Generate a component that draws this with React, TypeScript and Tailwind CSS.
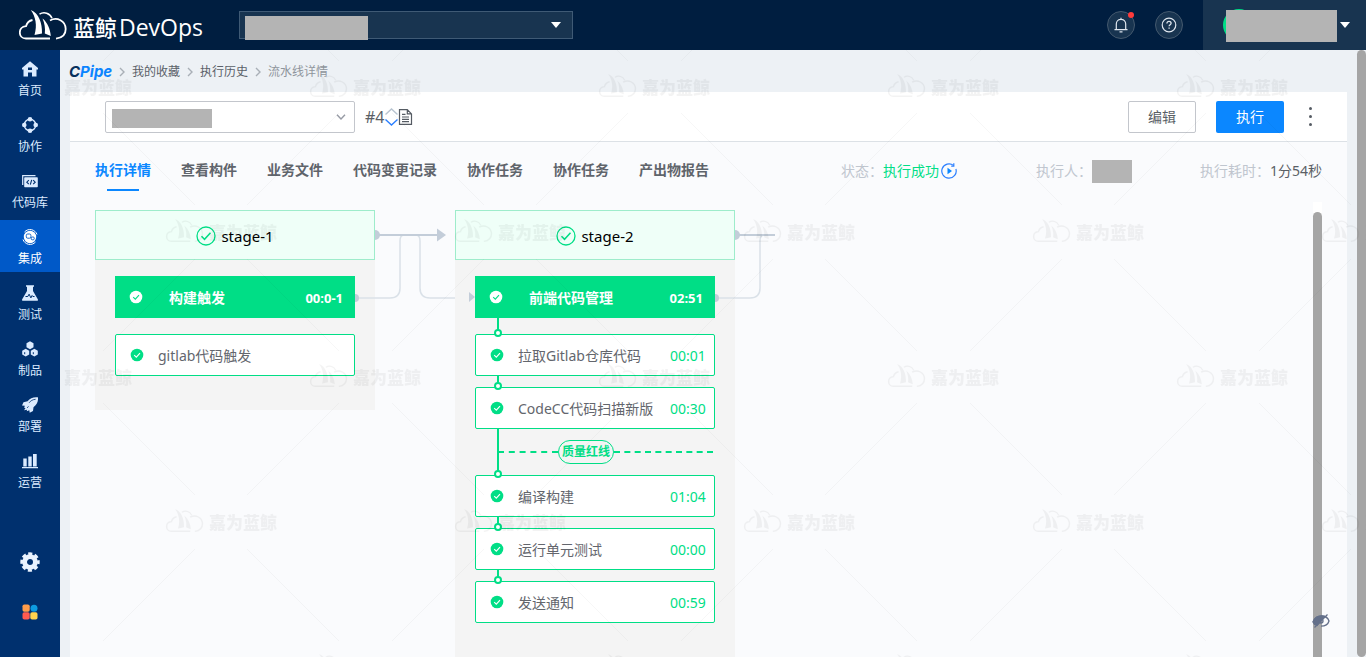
import { useState } from "react";
import type { ReactNode } from "react";
import clsx from "clsx";

type Step = { name: string; time?: string; gateBefore?: boolean };
type Stage = { name: string; job: string; jobTime: string; steps: Step[]; linked: boolean };

const tabs = ["执行详情", "查看构件", "业务文件", "代码变更记录", "协作任务", "协作任务", "产出物报告"];

const stages: Stage[] = [
  { name: "stage-1", job: "构建触发", jobTime: "00:0-1", linked: false, steps: [{ name: "gitlab代码触发" }] },
  {
    name: "stage-2",
    job: "前端代码管理",
    jobTime: "02:51",
    linked: true,
    steps: [
      { name: "拉取Gitlab仓库代码", time: "00:01" },
      { name: "CodeCC代码扫描新版", time: "00:30" },
      { name: "编译构建", time: "01:04", gateBefore: true },
      { name: "运行单元测试", time: "00:00" },
      { name: "发送通知", time: "00:59" },
    ],
  },
];

const icons: Record<string, ReactNode> = {
  home: <path d="M8 .2 0 7v1.500h1.500V15.600H6V11.500h4v4.100h4.500V8.500H16V7L8 .2ZM6 6.500h4v2.500H6Z" fillRule="evenodd" />,
  collab: (
    <>
      <circle cx="8" cy="8" r="5.800" fill="none" stroke="currentColor" strokeWidth="1.400" />
      <circle cx="8" cy="2.300" r="2.300" />
      <circle cx="8" cy="13.700" r="2.300" />
      <circle cx="2.300" cy="8" r="2.300" />
      <circle cx="13.700" cy="8" r="2.300" />
    </>
  ),
  code: (
    <>
      <path d="M0.700 12V2.700H13.500" fill="none" stroke="currentColor" strokeWidth="1.200" />
      <rect x="2.200" y="4.200" width="13.600" height="10" rx="0.800" />
      <path d="m6.800 7.200-2 2 2 2m4.400-4 2 2-2 2M9.700 6.800l-1.400 4.800" fill="none" stroke="#00306e" strokeWidth="1.100" />
    </>
  ),
  integrate: (
    <>
      <path d="M15 5.500A7.400 7.400 0 0 0 2.500 3M1 10.500A7.400 7.400 0 0 0 13.500 13" fill="none" stroke="currentColor" strokeWidth="1" />
      <circle cx="8" cy="8" r="6.200" />
      <rect x="4.300" y="5" width="4.600" height="4.200" rx="1.400" fill="none" stroke="#0059c8" strokeWidth="0.900" />
      <rect x="9.200" y="8" width="3" height="2.800" rx="1" fill="none" stroke="#0059c8" strokeWidth="0.900" />
    </>
  ),
  flask: (
    <>
      <path d="M4 0.300h8v1.500h-1v4.300l4.800 8.200c.400.800 0 1.500-.800 1.500H1c-.800 0-1.200-.700-.800-1.500l4.800-8.200V1.800h-1Z" />
      <path d="M3.500 11.500h2.300l1.300-2.300 1.800 3.700 1.200-2.400 .8 1h1.600" fill="none" stroke="#00306e" strokeWidth="1" />
    </>
  ),
  artifact: (
    <>
      <path d="m8 .300 3.500 2v3.900L8 8.200 4.500 6.200V2.300Z" />
      <path d="m3.700 7.700 3.500 2v3.900l-3.500 2-3.500-2V9.700Z" />
      <path d="m12.300 7.700 3.500 2v3.900l-3.500 2-3.500-2V9.700Z" />
      <path d="M2.700 11.200v2m8.600-2v2" stroke="#00306e" />
    </>
  ),
  rocket: (
    <>
      <path d="M15.900.300C11.500-.2 8 1.200 5.600 4.300L1.500 5.300 0 8.500l2.800.2-.6 2.100 1.300.4L2 13.300l3-.6-.2 1.600 2.500-1 .4 2.500 3.300-1.800.5-3.700C14.900 7.700 16.500 4.200 15.900.300Z" />
      <path d="M13.600 2.300c-3 .2-5 1.500-6.500 3.500M5 10.800l1.600-1.300" stroke="#00306e" strokeWidth="0.800" fill="none" />
    </>
  ),
  bars: <path d="M1.300 5.500h3.400v8H1.300ZM6.300 3.500h3.400v10H6.300ZM11 1h3.700v12.500H11ZM0 14h16v1.200H0Z" />,
};

const menu = [
  { icon: "home", label: "首页" },
  { icon: "collab", label: "协作" },
  { icon: "code", label: "代码库" },
  { icon: "integrate", label: "集成" },
  { icon: "flask", label: "测试" },
  { icon: "artifact", label: "制品" },
  { icon: "rocket", label: "部署" },
  { icon: "bars", label: "运营" },
];

function WhaleShape() {
  return (
    <>
      <path d="M31 28.500H7C-1 28.500-1.500 17 7 16.200c1-3.500 3-5.500 6.500-6.200" fill="none" stroke="currentColor" strokeWidth="1.800" />
      <path d="M20.500 4.200c4.500-3 10.500-1 12.500 4" fill="none" stroke="currentColor" strokeWidth="1.500" />
      <path d="M31 10.500c7-4 15.700.5 15.700 8.500 0 5.500-3.700 9-9.700 9.700" fill="none" stroke="currentColor" strokeWidth="1.800" />
      <path d="M11.800 0c8 3.500 11.500 12.500 11.200 23.500L15.500 25C18.500 15 16.500 6.500 11.800 0Z" />
      <path d="M23.500 8.500c5 4 7.800 10.500 8.300 17.500l-6-2.500C26.500 18 25.500 13 23.500 8.500Z" />
    </>
  );
}

function CheckDot({ inverse }: { inverse?: boolean }) {
  return (
    <svg viewBox="0 0 14 14" className="size-3.5 shrink-0" aria-hidden="true">
      <circle cx="7" cy="7" r="6.300" fill={inverse ? "#fff" : "#00de86"} />
      <path d="m4.200 7.200 2.100 2 3.700-4" fill="none" stroke={inverse ? "#00de86" : "#fff"} strokeWidth="1.100" />
    </svg>
  );
}

function Header() {
  return (
    <header className="flex h-[50px] shrink-0 bg-[#001e40] text-white">
      <a href="#" className="flex w-[239px] items-center pl-[19px]" aria-label="蓝鲸DevOps">
        <svg viewBox="0 0 48 31" className="h-[31px] w-12" fill="currentColor" aria-hidden="true">
          <WhaleShape />
        </svg>
        <span className="mt-1 ml-1.5 text-[22px] leading-8 font-medium">蓝鲸</span>
        <span className="mt-1 ml-0.5 font-['Open_Sans','Noto_Sans',sans-serif] text-[23px] leading-8">DevOps</span>
      </a>
      <div className="relative mt-[11px] h-7 w-[334px]">
        <select aria-label="项目" className="h-7 w-full appearance-none border border-[#3f5a75] bg-[#183450]" />
        <span className="pointer-events-none absolute top-[5px] left-1.5 h-6 w-[123px] bg-[#b4b4b4]" />
        <span className="pointer-events-none absolute top-[11px] right-3 border-x-[5px] border-t-[6px] border-x-transparent border-t-white" />
      </div>
      <div className="ml-auto flex items-center gap-5 pr-5">
        <button aria-label="消息" className="relative flex size-7 items-center justify-center rounded-full border border-[#44596e] bg-[#183450]">
          <svg viewBox="0 0 16 16" className="size-4" fill="none" stroke="#dfe6ee" strokeWidth="1.200">
            <path d="M1.500 12.700h13M3.300 12.500V7c0-2.800 2-4.700 4.700-4.700S12.700 4.200 12.700 7v5.500M8 2.300V.8M6.500 14.800h3" />
          </svg>
          <span className="absolute top-0 right-0 size-1.5 rounded-full bg-[#ff3b3b]" />
        </button>
        <button aria-label="帮助" className="flex size-7 items-center justify-center rounded-full border border-[#44596e] bg-[#183450]">
          <svg viewBox="0 0 16 16" className="size-4" fill="none" stroke="#dfe6ee" strokeWidth="1.200">
            <circle cx="8" cy="8" r="6.800" />
            <path d="M5.900 6.400c0-1.300.9-2.100 2.100-2.100s2.100.8 2.100 1.900c0 1.400-2 1.500-2 3.100M8.100 10.500v1.300" strokeWidth="1.300" />
          </svg>
        </button>
      </div>
      <button aria-label="用户" className="flex w-[163px] items-center bg-[#183450] pl-5">
        <span className="size-8 rounded-full bg-[#00de86]" />
        <span className="mt-0.5 -ml-[29px] h-8 w-[111px] bg-[#b4b4b4]" />
        <span className="ml-[3px] border-x-[5px] border-t-[6px] border-x-transparent border-t-white" />
      </button>
    </header>
  );
}

function Sidebar() {
  return (
    <nav className="flex w-[60px] shrink-0 flex-col bg-[#00306e] pt-0.5">
      <div className="flex flex-col gap-1">
        {menu.map((m) => (
          <a
            key={m.label}
            href="#"
            className={clsx(
              "flex h-[52px] flex-col items-center gap-1.5 pt-[9px] text-xs leading-4",
              m.icon === "integrate" ? "bg-[#0059c8] text-white" : "text-[#dcebff]"
            )}
          >
            <svg viewBox="0 0 16 16" className="size-4" fill="currentColor" aria-hidden="true">
              {icons[m.icon]}
            </svg>
            {m.label}
          </a>
        ))}
      </div>
      <button aria-label="设置" className="mx-auto mt-14 size-5 text-[#eaf3ff]">
        <svg viewBox="0 0 20 20" fill="none" stroke="currentColor">
          <circle cx="10" cy="10" r="5.400" strokeWidth="4.800" />
          <circle cx="10" cy="10" r="8.200" strokeWidth="3" strokeDasharray="4 2.440" strokeDashoffset="2" />
        </svg>
      </button>
      <button aria-label="应用" className="mx-auto mt-8 size-4">
        <svg viewBox="0 0 16 16">
          <rect x="0.500" y="0.500" width="7.200" height="7.200" rx="1.800" fill="#ff9c4a" />
          <circle cx="12" cy="4.200" r="3.500" fill="#0d9be0" />
          <rect x="0.500" y="8.300" width="7.200" height="7.200" rx="1.800" fill="#ff5a4f" />
          <rect x="8.300" y="8.300" width="7.200" height="7.200" rx="1.800" fill="#ffd34f" />
        </svg>
      </button>
    </nav>
  );
}

function Chevron() {
  return (
    <svg viewBox="0 0 6 10" className="mx-[7px] h-2.5 w-1.5" fill="none" stroke="#a9afb6" strokeWidth="1.400" aria-hidden="true">
      <path d="m1 1 4 4-4 4" />
    </svg>
  );
}

function Breadcrumb() {
  return (
    <nav className="flex h-[42px] shrink-0 items-center pt-0.5 pl-[9px] text-xs text-[#5a6068]">
      <a href="#" className="w-[43px] font-[Inter,sans-serif] text-[15px] leading-5 font-bold text-[#0b84ff] italic">
        <span className="text-[#06305c]">C</span>Pipe
      </a>
      <Chevron />
      <a href="#">我的收藏</a>
      <Chevron />
      <a href="#">执行历史</a>
      <Chevron />
      <span className="text-[#8f959c]">流水线详情</span>
    </nav>
  );
}

function Toolbar() {
  return (
    <div className="flex h-[50px] shrink-0 items-center border-b border-[#dce1e6] bg-white pr-[31px] pl-[35px] text-sm">
      <div className="relative h-8 w-[250px]">
        <select aria-label="流水线" className="size-full appearance-none rounded-xs border border-[#c3c6cc] bg-white" />
        <span className="pointer-events-none absolute top-2 left-[7px] h-[19px] w-[100px] bg-[#b4b4b4]" />
        <svg viewBox="0 0 10 6" className="pointer-events-none absolute top-[13px] right-[9px] h-1.5 w-2.5" fill="none" stroke="#979ba5" strokeWidth="1.400">
          <path d="m1 .700 4 4.300 4-4.300" />
        </svg>
      </div>
      <span className="ml-2.5 text-base text-[#5a5f66]">#4</span>
      <button aria-label="切换构建" className="h-[18px] w-[13px]">
        <svg viewBox="0 0 13 18" fill="none" strokeWidth="1.400">
          <path d="m.5 6.500 6-5.500 6 5.500" stroke="#b8c4d0" />
          <path d="m.5 11.500 6 5.500 6-5.500" stroke="#2b7fff" />
        </svg>
      </button>
      <button aria-label="备注" className="h-4 w-[15px]">
        <svg viewBox="0 0 15 16" fill="none" stroke="#555b63" strokeWidth="1.200">
          <path d="M1.500.700h7.800l4.200 4.200v10.400h-12ZM9.300.700v4.200h4.200M4 5.300h3.500M4 8h7M4 10.300h7M4 12.600h7" />
        </svg>
      </button>
      <button className="ml-auto h-8 w-[68px] rounded-xs border border-[#c3c6cc] bg-white text-[#5a5f66]">编辑</button>
      <button className="ml-5 h-8 w-[68px] rounded-xs bg-[#0b87ff] text-white">执行</button>
      <button aria-label="更多" className="ml-5 flex w-3 flex-col items-center gap-[5px]">
        <span className="size-[3px] rounded-full bg-[#555b63]" />
        <span className="size-[3px] rounded-full bg-[#555b63]" />
        <span className="size-[3px] rounded-full bg-[#555b63]" />
      </button>
    </div>
  );
}

function TabBar() {
  const [active, setActive] = useState(0);
  return (
    <div className="flex h-[60px] shrink-0 items-start justify-between px-[25px] text-sm whitespace-nowrap">
      <div className="flex gap-[30px]" role="tablist">
        {tabs.map((t, i) => (
          <button
            key={i}
            role="tab"
            aria-selected={i === active}
            onClick={() => setActive(i)}
            className={clsx("flex h-[49px] flex-col items-center pt-[18px] leading-5 font-bold", i === active ? "text-[#0b87ff]" : "text-[#5f646b]")}
          >
            {t}
            {i === active && <span className="mt-auto h-0.5 w-8 bg-[#0b87ff]" />}
          </button>
        ))}
      </div>
      <div className="flex h-[58px] items-center text-[#c0c6cf]">
        <span>状态：</span>
        <span className="text-[#00de86]">执行成功</span>
        <button aria-label="重新执行" className="ml-0.5 size-4">
          <svg viewBox="0 0 16 16" fill="none" stroke="#2b7fff" strokeWidth="1.200">
            <path d="M12.500 2.400A7.200 7.200 0 1 0 14.900 6" />
            <path d="M12.800.3v2.800h-2.600" />
            <path d="M6.500 4.800v6.400L11 8Z" fill="#0b87ff" stroke="none" />
          </svg>
        </button>
        <span className="ml-[79px]">执行人：</span>
        <span className="h-[23px] w-10 bg-[#b4b4b4]" />
        <span className="ml-[68px]">执行耗时：</span>
        <span className="text-[#5a5f66]">1分54秒</span>
      </div>
    </div>
  );
}

// lines that leave a stage on its right side, the last one is cut short
function StageLinks({ last }: { last: boolean }) {
  return (
    <svg viewBox="0 0 116 100" className="pointer-events-none absolute top-0 left-[260px] h-[100px] w-[116px]" fill="none" aria-hidden="true">
      <path d="M0 88H35Q45 88 45 78V31Q45 26 48 25" stroke="#dae1e8" strokeWidth="1.500" />
      <path d="M0 84a4 4 0 0 1 0 8Z" fill="#c3cdd9" />
      {!last && <path d="M62 25q3 1 3 6V78Q65 88 75 88H114" stroke="#dae1e8" strokeWidth="1.500" />}
      <path d={last ? "M20 25H60" : "M20 25H84"} stroke="#c3cdd9" strokeWidth="2" />
      <path d="M20 20a5 5 0 0 1 0 10Z" fill="#c3cdd9" />
      {!last && <path d="M82 18.500l9 6.500-9 6.500Z" fill="#c3cdd9" />}
    </svg>
  );
}

function StepRow({ step, linked }: { step: Step; linked: boolean }) {
  return (
    <li className="flex flex-col">
      {step.gateBefore && (
        <div className="flex h-[35px] items-center pt-[11px] pr-0.5 pl-[23px]">
          <span className="h-0 flex-1 border-t-2 border-dashed border-[#00de86]" />
          <span className="my-[-6px] shrink-0 rounded-full border border-[#00de86] px-[3px] text-xs leading-[22px] font-bold text-[#00de86]">质量红线</span>
          <span className="h-0 w-[99px] border-t-2 border-dashed border-[#00de86]" />
        </div>
      )}
      <div className="relative mt-[11px] flex h-[42px] items-center rounded-xs border border-[#00de86] bg-white pr-2 pl-[14px] text-sm">
        {linked && (
          <>
            <span
              className={clsx("absolute left-[21px] w-0.5 bg-[#00de86]", step.gateBefore ? "-top-[47px] h-[44px]" : "-top-3 h-2")}
            />
            <span className="absolute -top-1.5 left-[18px] size-2 rounded-full border-2 border-[#00de86] bg-white" />
          </>
        )}
        <CheckDot />
        <span className="ml-3.5 pt-0.5 text-[#63666d]">{step.name}</span>
        <span className="ml-auto w-9 pt-0.5 text-[#00de86]">{step.time}</span>
      </div>
    </li>
  );
}

function StageColumn({ stage, last }: { stage: Stage; last: boolean }) {
  return (
    <section className="relative w-[280px] shrink-0 self-start bg-[#f4f4f4] pb-[34px]">
      <h2 className="flex h-[50px] items-center justify-center gap-[5px] border border-[#9eeccb] bg-[#effff8] pt-0.5 text-[15px] text-black">
        <svg viewBox="0 0 20 20" className="size-5" fill="none" stroke="#00de86" strokeWidth="1.300" aria-hidden="true">
          <circle cx="10" cy="10" r="9" />
          <path d="m5.500 10.300 3 3 6-6.600" strokeWidth="1.500" />
        </svg>
        {stage.name}
      </h2>
      <div className="px-5 pt-4">
        <div className="relative flex h-[42px] items-center bg-[#00de86] pr-3 pl-[14px] text-sm font-bold text-white">
          {stage.linked && (
            <>
              <span className="absolute -left-1.5 border-y-[5px] border-l-[6px] border-y-transparent border-l-[#c3cdd9]" />
              <span className="absolute top-full left-[22px] h-2 w-0.5 bg-[#00de86]" />
            </>
          )}
          <CheckDot inverse />
          <span className="ml-[26px] pt-0.5">{stage.job}</span>
          <span className="ml-auto pt-0.5 text-[13px]">{stage.jobTime}</span>
        </div>
        <ul className="pt-[5px]">
          {stage.steps.map((s) => (
            <StepRow key={s.name} step={s} linked={stage.linked} />
          ))}
        </ul>
      </div>
      <StageLinks last={last} />
    </section>
  );
}

function WatermarkLogo({ x, y }: { x: number; y: number }) {
  return (
    <g transform={`translate(${x} ${y})`}>
      <g transform="translate(-55 -13) scale(.78)">
        <WhaleShape />
      </g>
      <text x="-12" y="7" fontSize="17" fontWeight="900">嘉为蓝鲸</text>
    </g>
  );
}

function Watermark() {
  return (
    <svg className="pointer-events-none absolute inset-0 size-full text-black opacity-[0.045]" fill="currentColor" aria-hidden="true">
      <defs>
        <pattern id="wm" x="-128" y="-108" width="289" height="290" patternUnits="userSpaceOnUse">
          <WatermarkLogo x={144} y={145} />
          <WatermarkLogo x={0} y={0} />
          <WatermarkLogo x={289} y={0} />
          <WatermarkLogo x={0} y={290} />
          <WatermarkLogo x={289} y={290} />
          <path d="M26 27l92 92M263 27l-92 92M26 263l92-92M263 263l-92-92" stroke="currentColor" strokeWidth="1" opacity="0.600" />
        </pattern>
      </defs>
      <rect width="100%" height="100%" fill="url(#wm)" />
    </svg>
  );
}

export default function App() {
  return (
    <div className="flex h-screen flex-col overflow-hidden font-['Noto_Sans','Noto_Sans_CJK_SC',sans-serif]">
      <Header />
      <div className="flex min-h-0 flex-1">
        <Sidebar />
        <main className="relative flex min-w-0 flex-1 bg-[#edf1f5]">
          <div className="flex min-w-0 flex-1 flex-col">
            <Breadcrumb />
            <div className="mx-2.5 flex min-h-0 flex-1 flex-col bg-[#fafbfd]">
              <Toolbar />
              <TabBar />
              <div className="flex min-h-0 flex-1 px-[25px]">
                <div className="flex min-w-0 flex-1 gap-20 overflow-hidden pt-2">
                  {stages.map((s, i) => (
                    <StageColumn key={s.name} stage={s} last={i === stages.length - 1} />
                  ))}
                </div>
                <div className="flex w-[9px] flex-col bg-white pt-2.5">
                  <span className="flex-1 rounded-t-full bg-[#a5a5a5]" />
                </div>
              </div>
            </div>
          </div>
          <div className="flex w-[9px] flex-col bg-[#edf1f5]">
            <span className="flex-1 rounded-full bg-[#a5a5a5]" />
          </div>
          <Watermark />
          <button aria-label="隐藏" className="absolute right-9 bottom-[29px] h-3.5 w-[18px]">
            <svg viewBox="0 0 18 14" fill="none" stroke="#64708a" strokeWidth="1.300">
              <path d="M1 8C3 3.500 6 2 9.500 2S16 4 17 7c-1 3.500-4 5.200-8 5.200" />
              <path d="M1 8C3 3.500 6 2 9.500 2l3 .5L5 11.500C3 10.800 1.500 9.500 1 8Z" fill="#64708a" />
              <path d="M15.500.500 2.500 13.500" />
              <circle cx="9" cy="7" r="2" />
            </svg>
          </button>
        </main>
      </div>
    </div>
  );
}
